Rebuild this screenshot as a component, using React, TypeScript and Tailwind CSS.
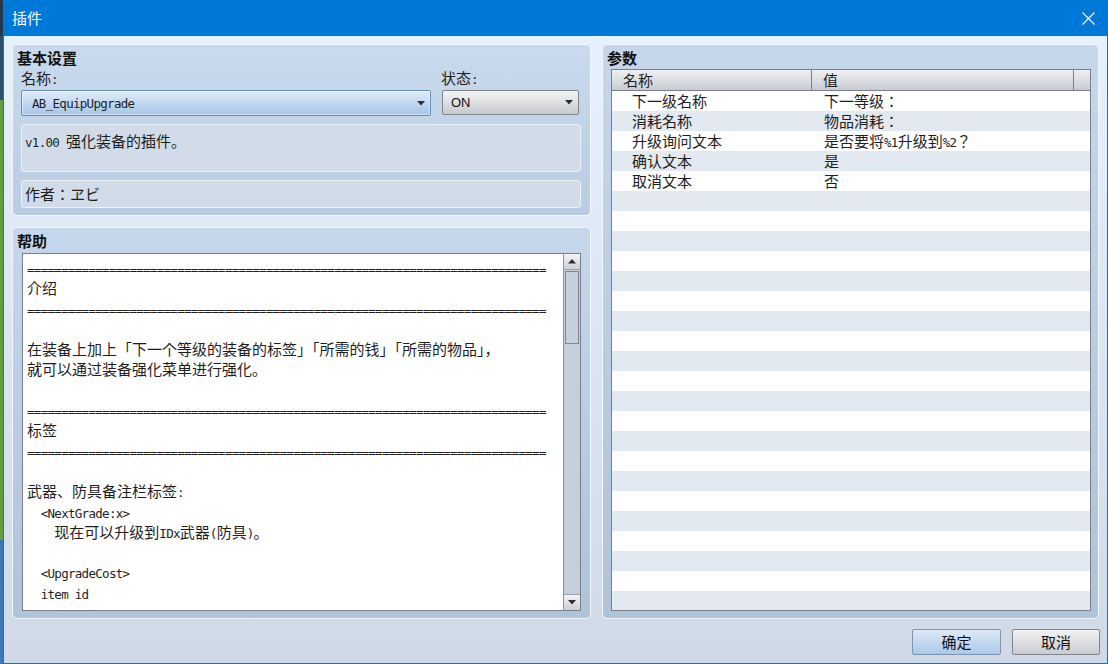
import React from "react";

const LATIN = "font-['DejaVu_Sans_Mono',monospace] text-[12.5px] tracking-[-0.7px]";
const CJK = "font-['Noto_Sans_CJK_JP','Noto_Sans_CJK_SC',sans-serif] text-[15px]";

function Mixed({ text }: { text: string }) {
  const parts = text.split(/([\u0000-\u007f]+)/).filter((p) => p.length > 0);
  return (
    <>
      {parts.map((p, i) =>
        /^[\u0000-\u007f]+$/.test(p) ? (
          <span key={i} className={LATIN}>
            {p}
          </span>
        ) : (
          <span key={i} className={CJK}>
            {p}
          </span>
        )
      )}
    </>
  );
}

function DownTri({ className = "" }: { className?: string }) {
  return (
    <svg width="8" height="5" viewBox="0 0 8 5" className={className}>
      <path d="M0 0 H8 L4 4.5 Z" fill="#2b2f35" />
    </svg>
  );
}

const EQ = "=".repeat(76);

const helpLines = [
  EQ,
  "介绍",
  EQ,
  "",
  "在装备上加上「下一个等级的装备的标签」「所需的钱」「所需的物品」，",
  "就可以通过装备强化菜单进行强化。",
  "",
  EQ,
  "标签",
  EQ,
  "",
  "武器、防具备注栏标签:",
  "  <NextGrade:x>",
  "    现在可以升级到IDx武器(防具)。",
  "",
  "  <UpgradeCost>",
  "  item id",
];

const params: [string, string][] = [
  ["下一级名称", "下一等级："],
  ["消耗名称", "物品消耗："],
  ["升级询问文本", "是否要将%1升级到%2？"],
  ["确认文本", "是"],
  ["取消文本", "否"],
];

const rows: [string, string][] = [...params];
while (rows.length < 27) rows.push(["", ""]);

export default function App() {
  return (
    <div className="w-[1108px] h-[664px] flex overflow-hidden bg-[#203040] text-[#1e1e1e]">
      {/* desktop strip behind the window */}
      <div className="w-[3px] flex flex-col shrink-0">
        <div className="h-[36px] bg-[#26384c]" />
        <div className="h-[64px] bg-[#2d4f6e]" />
        <div className="flex-1 bg-[#5f9e45]" />
        <div className="h-[124px] bg-[#3a78b6]" />
      </div>

      {/* window */}
      <div className="flex-1 flex flex-col border-l border-r border-b border-[#0078d7]">
        {/* title bar */}
        <div className="h-[36px] shrink-0 bg-[#0078d7] flex items-center justify-between pl-[8px] pr-[12px]">
          <span className="text-white text-[15px] font-['Noto_Sans_CJK_SC',sans-serif]">插件</span>
          <svg width="13" height="13" viewBox="0 0 13 13">
            <path d="M0.5 0.5 L12.5 12.5 M12.5 0.5 L0.5 12.5" stroke="#ffffff" strokeWidth="1.1" />
          </svg>
        </div>

        {/* body */}
        <div className="flex-1 flex flex-col bg-linear-to-b from-[#e6f1fd] to-[#cfdae6] px-[8px] pt-[8px] pb-[8px]">
          <div className="flex gap-[11px] h-[575px]">
            {/* left column */}
            <div className="w-[579px] flex flex-col gap-[11px]">
              {/* basic settings */}
              <div className="h-[172px] rounded-[5px] border border-[#f3f7fc] bg-linear-to-b from-[#c9daee] to-[#b9cce1] pl-[8px] pr-[9px] pt-[3px] flex flex-col">
                <div className="h-[20px] -ml-[4px] flex items-center font-bold text-[15px] font-['Noto_Sans_CJK_SC',sans-serif] text-[#111]">
                  基本设置
                </div>
                <div className="h-[22px] flex items-center">
                  <div className="w-[420px] leading-[22px]">
                    <Mixed text="名称:" />
                  </div>
                  <div className="leading-[22px]">
                    <Mixed text="状态:" />
                  </div>
                </div>
                <div className="h-[26px] flex gap-[11px]">
                  <div className="w-[410px] h-[26px] rounded-[2px] border border-[#6a8db6] bg-linear-to-b from-[#e0ecf9] via-[#c2d9f1] to-[#a6c5e8] flex items-center justify-between pl-[10px] pr-[5px] shadow-[inset_0_0_0_1px_rgba(255,255,255,0.45)]">
                    <span className="leading-[20px]">
                      <Mixed text="AB_EquipUpgrade" />
                    </span>
                    <DownTri />
                  </div>
                  <div className="w-[137px] h-[25px] rounded-[2px] border border-[#7f848b] bg-linear-to-b from-[#f5f5f6] to-[#c6cacf] flex items-center justify-between pl-[8px] pr-[5px]">
                    <span className="text-[13px] font-['Liberation_Sans',Arial,sans-serif] text-[#111]">ON</span>
                    <DownTri />
                  </div>
                </div>
                <div className="mt-[8px] h-[48px] rounded-[3px] border border-[#edf2f8] bg-[#d1dce8] pl-[3px] pt-[6px]">
                  <div className="leading-[20px]">
                    <Mixed text="v1.00 强化装备的插件。" />
                  </div>
                </div>
                <div className="mt-[8px] h-[28px] rounded-[3px] border border-[#edf2f8] bg-[#d1dce8] pl-[3px] flex items-center">
                  <div className="leading-[20px]">
                    <Mixed text="作者：ヱビ" />
                  </div>
                </div>
              </div>

              {/* help */}
              <div className="h-[392px] rounded-[5px] border border-[#f3f7fc] bg-linear-to-b from-[#c6d7eb] to-[#afc3d9] pl-[9px] pr-[9px] pt-[3px] flex flex-col">
                <div className="h-[20px] -ml-[5px] flex items-center font-bold text-[15px] font-['Noto_Sans_CJK_SC',sans-serif] text-[#111]">
                  帮助
                </div>
                <div className="mt-[2px] h-[358px] border border-[#7b8088] bg-white flex">
                  <div className="flex-1 pl-[4px] pt-[4px] overflow-hidden">
                    {helpLines.map((l, i) => (
                      <div key={i} className="h-[20.3px] leading-[20.3px] whitespace-pre">
                        {l ? <Mixed text={l} /> : "\u00a0"}
                      </div>
                    ))}
                  </div>
                  <div className="w-[17px] border-l border-[#8c939b] bg-[#c3cfdb] flex flex-col">
                    <div className="h-[16px] border-b border-[#9ba2aa] bg-linear-to-b from-[#f3f4f6] to-[#cdd2d8] flex items-center justify-center">
                      <svg width="8" height="5" viewBox="0 0 8 5">
                        <path d="M0 4.5 H8 L4 0 Z" fill="#2b2f35" />
                      </svg>
                    </div>
                    <div className="mt-[1px] mx-[1px] h-[73px] border border-[#7f8791] bg-[#c6d0dc]" />
                    <div className="flex-1" />
                    <div className="h-[16px] border-t border-[#9ba2aa] bg-linear-to-b from-[#f3f4f6] to-[#cdd2d8] flex items-center justify-center">
                      <DownTri />
                    </div>
                  </div>
                </div>
              </div>
            </div>

            {/* params */}
            <div className="w-[497px] rounded-[5px] border border-[#f3f7fc] bg-linear-to-b from-[#c6d7eb] to-[#afc3d9] pl-[8px] pr-[7px] pt-[3px] flex flex-col">
              <div className="h-[20px] -ml-[4px] flex items-center font-bold text-[15px] font-['Noto_Sans_CJK_SC',sans-serif] text-[#111]">
                参数
              </div>
              <div className="mt-[1px] h-[542px] border border-[#7b8088] bg-white flex flex-col overflow-hidden">
                <div className="h-[21px] shrink-0 border-b border-[#7b8088] bg-linear-to-b from-[#eff1f4] to-[#c8ccd2] flex">
                  <div className="w-[200px] border-r border-[#7b8088] pl-[11px] leading-[20px]">
                    <Mixed text="名称" />
                  </div>
                  <div className="w-[262px] border-r border-[#7b8088] pl-[11px] leading-[20px]">
                    <Mixed text="值" />
                  </div>
                  <div className="flex-1" />
                </div>
                {rows.map(([a, b], i) => (
                  <div
                    key={i}
                    className={
                      i % 2 === 0
                        ? "h-[20px] shrink-0 flex bg-white"
                        : "h-[20px] shrink-0 flex bg-[#e3e9f0]"
                    }
                  >
                    <div className="w-[200px] pl-[20px] leading-[20px] whitespace-nowrap">
                      {a ? <Mixed text={a} /> : null}
                    </div>
                    <div className="flex-1 pl-[12px] leading-[20px] whitespace-nowrap">
                      {b ? <Mixed text={b} /> : null}
                    </div>
                  </div>
                ))}
              </div>
            </div>
          </div>

          {/* buttons */}
          <div className="mt-[10px] h-[26px] flex justify-end gap-[11px] -mr-[1px]">
            <div className="w-[89px] h-[26px] rounded-[2px] border border-[#7f95ae] bg-linear-to-b from-[#dde9f7] to-[#abc9ea] flex items-center justify-center text-[15px] font-['Noto_Sans_CJK_SC',sans-serif] text-[#111]">
              确定
            </div>
            <div className="w-[88px] h-[26px] rounded-[2px] border border-[#80858c] bg-linear-to-b from-[#f2f2f3] to-[#c8ccd1] flex items-center justify-center text-[15px] font-['Noto_Sans_CJK_SC',sans-serif] text-[#111]">
              取消
            </div>
          </div>
        </div>
      </div>
    </div>
  );
}
